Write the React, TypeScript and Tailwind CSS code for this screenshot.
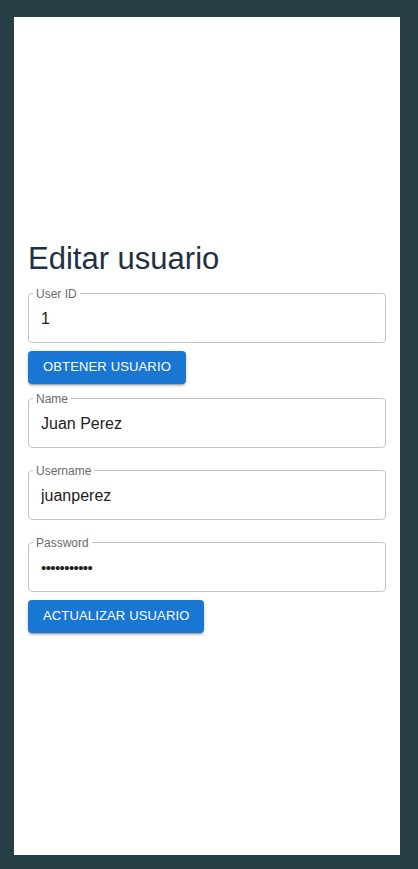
import { useState } from 'react';

type FieldProps = {
  label: string;
  value: string;
  type?: string;
};

const Field = ({ label, value, type = 'text' }: FieldProps) => {
  const [val, setVal] = useState(value);
  return (
    <fieldset className="m-0 rounded-[4px] border border-[#c4c4c4] px-[4px] pt-0 pb-[4px]">
      <legend className="ml-0 px-[3px] text-[12px] leading-[12px] text-[#6b6b6b]">{label}</legend>
      <input
        type={type}
        value={val}
        onChange={(e) => setVal(e.target.value)}
        className={
          type === 'password'
            ? 'block h-[38px] w-full bg-transparent px-[8px] text-[15px] tracking-[-0.6px] text-[#212121] outline-none'
            : 'block h-[38px] w-full bg-transparent px-[8px] text-[16px] text-[#212121] outline-none'
        }
      />
    </fieldset>
  );
};

const Button = ({ children }: { children: string }) => (
  <button
    type="button"
    className="h-[33px] self-start rounded-[4px] bg-[#1976d2] px-[15px] text-[13px] tracking-[0.15px] text-white uppercase shadow-[0_3px_1px_-2px_rgba(0,0,0,0.2),0_2px_2px_0_rgba(0,0,0,0.14),0_1px_5px_0_rgba(0,0,0,0.12)]"
  >
    {children}
  </button>
);

export default function App() {
  return (
    <div
      className="flex h-screen bg-[#263f44] pt-[17px] pr-[18px] pb-[14px] pl-[14px]"
      style={{ fontFamily: '"Liberation Sans", Arial, sans-serif' }}
    >
      <div className="flex flex-1 flex-col justify-center bg-white px-[14px]">
        <h1 className="text-[31px] leading-[37px] font-normal text-[#223140]">Editar usuario</h1>

        {/* Buscar */}
        <div className="mt-[11px] flex flex-col">
          <Field label="User ID" value="1" />
          <div className="mt-[8px] flex">
            <Button>Obtener usuario</Button>
          </div>
        </div>

        {/* Datos */}
        <div className="mt-[9px] flex flex-col gap-[17px]">
          <Field label="Name" value="Juan Perez" />
          <Field label="Username" value="juanperez" />
          <Field label="Password" value="12345678901" type="password" />
        </div>
        <div className="mt-[8px] flex">
          <Button>Actualizar usuario</Button>
        </div>
      </div>
    </div>
  );
}
